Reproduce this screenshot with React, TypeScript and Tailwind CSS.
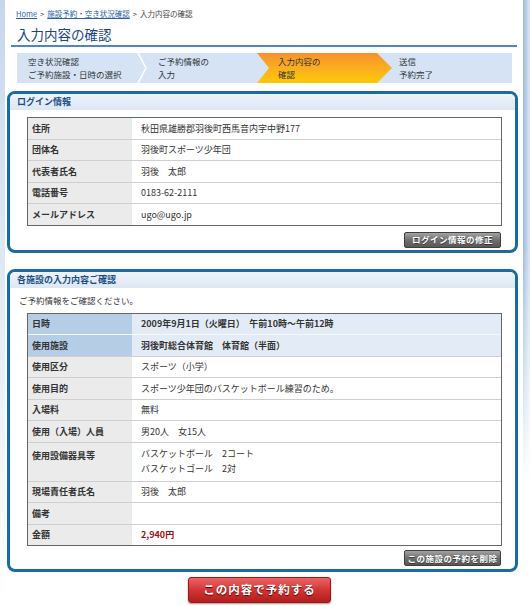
import React from 'react';

const font = { fontFamily: '"Noto Sans CJK JP", "Noto Sans", sans-serif' };

const loginRows: [string, string][] = [
  ['住所', '秋田県雄勝郡羽後町西馬音内字中野177'],
  ['団体名', '羽後町スポーツ少年団'],
  ['代表者氏名', '羽後　太郎'],
  ['電話番号', '0183-62-2111'],
  ['メールアドレス', 'ugo@ugo.jp'],
];

type Row = { label: string; value: React.ReactNode; kind?: 'head' | 'price' | 'tall' };

const facilityRows: Row[] = [
  { label: '日時', value: '2009年9月1日（火曜日）　午前10時～午前12時', kind: 'head' },
  { label: '使用施設', value: '羽後町総合体育館　体育館（半面）', kind: 'head' },
  { label: '使用区分', value: 'スポーツ（小学）' },
  { label: '使用目的', value: 'スポーツ少年団のバスケットボール練習のため。' },
  { label: '入場料', value: '無料' },
  { label: '使用（入場）人員', value: '男20人　女15人' },
  {
    label: '使用設備器具等',
    value: (
      <>
        <div>バスケットボール　2コート</div>
        <div>バスケットゴール　2対</div>
      </>
    ),
    kind: 'tall',
  },
  { label: '現場責任者氏名', value: '羽後　太郎' },
  { label: '備考', value: '' },
  { label: '金額', value: '2,940円', kind: 'price' },
];

function Panel({ title, children }: { title: string; children: React.ReactNode }) {
  return (
    <div className="overflow-hidden rounded-[8px] border-[3px] border-[#1b6c9e] bg-white">
      <div className="h-[16px] bg-gradient-to-b from-[#eef3fa] to-[#dde7f3] pl-[7px] text-[9px] font-bold leading-[16px] text-[#1a4f86]">
        {title}
      </div>
      {children}
    </div>
  );
}

function GrayButton({ children }: { children: React.ReactNode }) {
  return (
    <div className="flex justify-end pr-[14px]">
      <div className="flex h-[16px] w-[97px] items-center justify-center rounded-[2px] border border-[#3f3f3f] bg-gradient-to-b from-[#a3a3a3] via-[#6f6f6f] to-[#585858] text-[8.5px] font-bold tracking-[0.5px] text-white [text-shadow:0_1px_0_#333]">
        {children}
      </div>
    </div>
  );
}

function InfoTable({ rows }: { rows: Row[] }) {
  return (
    <div className="ml-[17px] mr-[13px] border border-[#666] text-[9px] text-[#333]">
      {rows.map((r, i) => {
        const head = r.kind === 'head';
        const tall = r.kind === 'tall';
        return (
          <div key={i} className={`flex ${i > 0 ? (head ? 'border-t border-[#f4f7fb]' : 'border-t border-[#cfcfcf]') : ''}`}>
            <div
              className={`w-[104px] shrink-0 pl-[4px] font-bold ${head ? 'bg-[#b6cde6]' : 'bg-[#ebebeb]'} ${
                tall ? 'h-[38px] pt-[5px] leading-[15px]' : 'flex h-[20.5px] items-center'
              }`}
            >
              {r.label}
            </div>
            <div
              className={`flex-1 pl-[9px] ${head ? 'bg-[#e3ecf6] font-bold' : ''} ${r.kind === 'price' ? 'font-bold text-[#9a0f0f]' : ''} ${
                tall ? 'h-[38px] pt-[3px] leading-[15px]' : 'flex h-[20.5px] items-center'
              }`}
            >
              {r.value}
            </div>
          </div>
        );
      })}
    </div>
  );
}

export default function App() {
  return (
    <div className="flex min-h-[606px] w-[530px] bg-white" style={font}>
      <div className="w-[5px] shrink-0 bg-gradient-to-b from-[#c6d8ed] via-[#e2ebf6] to-white" />
      <div className="w-[518px] shrink-0">
        <div className="ml-[11px] pt-[8px] text-[7.5px] leading-[11px] text-[#444]">
          <span className="text-[#2a5fa8] underline">Home</span>
          <span className="mx-[3px]">&gt;</span>
          <span className="text-[#2a5fa8] underline">施設予約・空き状況確認</span>
          <span className="mx-[3px]">&gt;</span>
          <span>入力内容の確認</span>
        </div>
        <div className="ml-[6px] mt-[6px] w-[506px] border-b-2 border-[#4d87c0] pb-[2px] pl-[6px] text-[13.5px] leading-[18px] text-[#17468a]">
          入力内容の確認
        </div>

        <div className="ml-[12px] mt-[6px] flex h-[30px] w-[495px] bg-[#d5e3f4] text-[8.5px] leading-[13px] text-[#333]">
          <div className="flex w-[120px] flex-col justify-center pl-[11px]">
            <span>空き状況確認</span>
            <span>ご予約施設・日時の選択</span>
          </div>
          <svg width="10" height="30" viewBox="0 0 10 30" className="shrink-0">
            <polyline points="1,0 9,15 1,30" fill="none" stroke="#ffffff" strokeWidth="1.5" />
          </svg>
          <div className="flex w-[110px] flex-col justify-center pl-[11px]">
            <span>ご予約情報の</span>
            <span>入力</span>
          </div>
          <div className="flex w-[135px] flex-col justify-center bg-gradient-to-b from-[#f6922a] to-[#fdc900] pl-[21px] [clip-path:polygon(0_0,calc(100%_-_15px)_0,100%_50%,calc(100%_-_15px)_100%,0_100%,12px_50%)]">
            <span>入力内容の</span>
            <span>確認</span>
          </div>
          <div className="flex flex-1 flex-col justify-center pl-[7px]">
            <span>送信</span>
            <span>予約完了</span>
          </div>
        </div>

        <div className="ml-[2px] mr-[5px] mt-[8px]">
          <Panel title="ログイン情報">
            <div className="mt-[7px]">
              <InfoTable rows={loginRows.map(([label, value]) => ({ label, value }))} />
            </div>
            <div className="mb-[2px] mt-[6px]">
              <GrayButton>ログイン情報の修正</GrayButton>
            </div>
          </Panel>
        </div>

        <div className="ml-[2px] mr-[5px] mt-[16px]">
          <Panel title="各施設の入力内容ご確認">
            <div className="mt-[6px] pl-[9px] text-[8.5px] leading-[12px] text-[#333]">ご予約情報をご確認ください。</div>
            <div className="mt-[7px]">
              <InfoTable rows={facilityRows} />
            </div>
            <div className="mb-[3px] mt-[4px]">
              <GrayButton>この施設の予約を削除</GrayButton>
            </div>
          </Panel>
        </div>

        <div className="ml-[183px] mt-[5px] flex h-[26px] w-[143px] items-center justify-center rounded-[3px] border border-[#9c1717] bg-gradient-to-b from-[#ea6464] via-[#d23434] to-[#b31d1d] text-[11.5px] font-bold tracking-[1px] text-white shadow-[0_1px_2px_rgba(0,0,0,0.4)] [text-shadow:0_1px_1px_#5a0000]">
          この内容で予約する
        </div>
      </div>
      <div className="w-[7px] shrink-0 bg-gradient-to-r from-[#9dbadb] to-[#dde8f5] [mask-image:linear-gradient(to_bottom,#000_0%,#000_40%,transparent_80%)]" />
    </div>
  );
}
